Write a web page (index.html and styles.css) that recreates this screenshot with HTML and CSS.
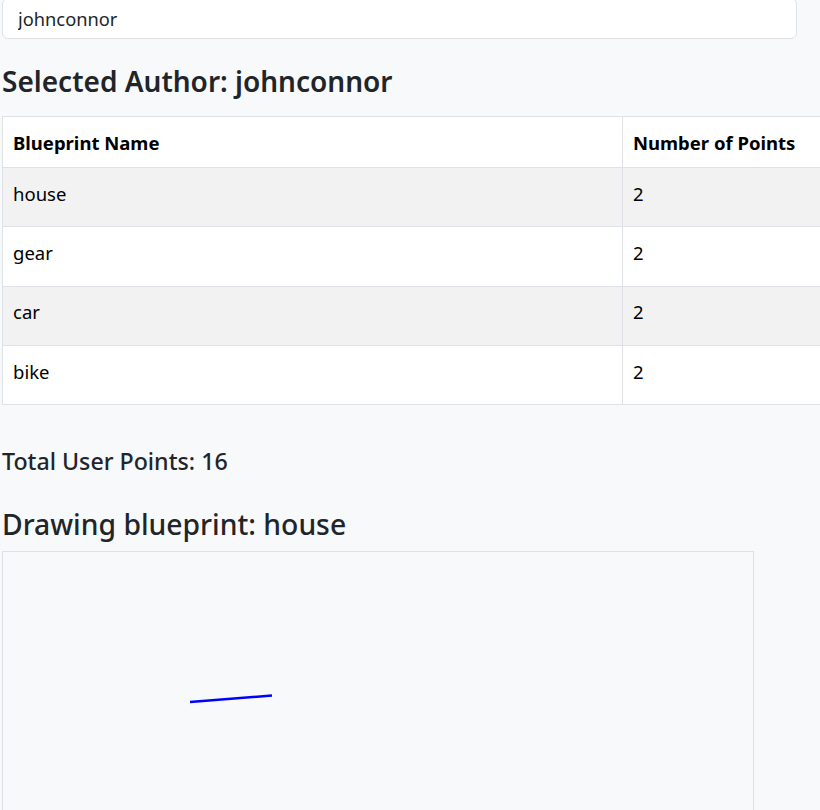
FILE: index.html
```html
<!DOCTYPE html>
<html>
<head>
<meta charset="utf-8">
<link rel="stylesheet" href="styles.css">
</head>
<body>
<div class="page">
  <input class="author-input" type="text" value="johnconnor">
  <h3 class="title">Selected Author: johnconnor</h3>
  <div class="table-wrap">
    <table class="bp-table">
      <thead>
        <tr><th class="col-name">Blueprint Name</th><th>Number of Points</th></tr>
      </thead>
      <tbody>
        <tr class="odd"><td>house</td><td>2</td></tr>
        <tr><td>gear</td><td>2</td></tr>
        <tr class="odd"><td>car</td><td>2</td></tr>
        <tr><td>bike</td><td>2</td></tr>
      </tbody>
    </table>
  </div>
  <h4 class="total">Total User Points: 16</h4>
  <h3 class="drawing">Drawing blueprint: house</h3>
  <div class="canvas">
    <svg width="750" height="260" viewBox="0 0 750 260">
      <line x1="187" y1="150" x2="269" y2="143.5" stroke="#0000ff" stroke-width="2.5"/>
    </svg>
  </div>
</div>
</body>
</html>
```
FILE: styles.css
```css
html, body {
  margin: 0;
  padding: 0;
  background: #f8f9fa;
  overflow: hidden;
}
body {
  font-family: "Noto Sans", "Open Sans", sans-serif;
  color: #212529;
  width: 820px;
  height: 810px;
}
.page {
  padding-left: 2px;
  margin-top: -2px;
}
.author-input {
  display: block;
  box-sizing: border-box;
  width: 795px;
  height: 41px;
  margin: 0;
  padding: 6px 15px;
  font-family: inherit;
  font-size: 18.3px;
  color: #212529;
  background: #fff;
  border: 1px solid #dee2e6;
  border-radius: 6px;
}
.title {
  margin: 24px 0 0;
  font-size: 28px;
  font-weight: 600;
  line-height: 36px;
}
.table-wrap {
  margin-top: 17px;
}
.bp-table {
  border-collapse: collapse;
  width: 840px;
  background: #fff;
  font-size: 18.5px;
}
.bp-table th, .bp-table td {
  border: 1px solid #dee2e6;
  text-align: left;
  padding: 0 10px;
  color: #000;
}
.bp-table th {
  height: 50px;
  font-weight: 700;
}
.col-name {
  width: 599px;
}
.bp-table td {
  height: 50.3px;
  padding-bottom: 8px;
}
.bp-table tr.odd td {
  background: #f2f2f2;
}
.total {
  margin: 40px 0 0;
  font-size: 23.2px;
  font-weight: 500;
  line-height: 32px;
}
.drawing {
  margin: 29px 0 0;
  font-size: 28.3px;
  font-weight: 500;
  line-height: 36px;
}
.canvas {
  margin-top: 9px;
  width: 750px;
  height: 300px;
  border: 1px solid #dee2e6;
}
.canvas svg {
  display: block;
}
```
